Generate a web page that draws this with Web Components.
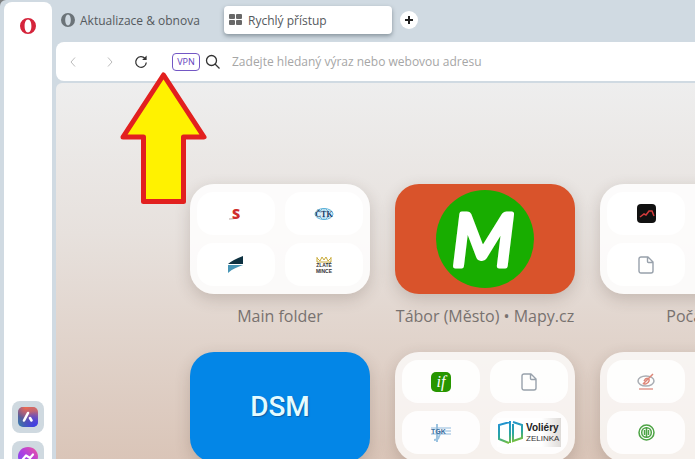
<!DOCTYPE html>
<html lang="cs">
<head>
<meta charset="utf-8">
<title>Rychlý přístup</title>
<style>
  html {
    height: 100%;
    background: #7d7f80;
  }

  body {
    margin: 0;
    height: 100%;
    overflow: hidden;
    font-family: "Open Sans", "Noto Sans", sans-serif;
    font-size: 12px;
    color: #54595d;
  }

  .dsm {
    font: 500 28px/32px Roboto, sans-serif;
    color: #e4fbff;
    text-shadow: 1px 1px 1px #0b5fa8;
  }

  svg {
    overflow: visible;
  }
</style>
</head>
<body>
<browser-window>
  <side-bar slot="side">
    <side-button slot="top" label="Opera" plain>
      <svg width="18" height="18" viewBox="0 0 18 18"><path fill="#d5243b" fill-rule="evenodd" d="M9 1a8 8 0 1 0 0 16A8 8 0 1 0 9 1zM9 2.600c2.300 0 3.400 3 3.400 6.400s-1.100 6.400-3.400 6.400S5.600 12.400 5.600 9 6.700 2.600 9 2.600z"/></svg>
    </side-button>
    <side-button label="Aria">
      <svg width="20" height="20" viewBox="0 0 20 20">
        <defs>
          <linearGradient id="aria" x1="0" y1="1" x2="1" y2="0">
            <stop offset="0" stop-color="#2f7fb4"/><stop offset=".35" stop-color="#5a5b9c"/><stop offset=".6" stop-color="#7c55a8"/><stop offset="1" stop-color="#e0705c"/>
          </linearGradient>
          <radialGradient id="warm" cx=".4" cy="0" r=".6"><stop offset="0" stop-color="#ee6c4d"/><stop offset="1" stop-color="#ee6c4d" stop-opacity="0"/></radialGradient>
          <radialGradient id="cool" cx=".9" cy="1" r=".8"><stop offset="0" stop-color="#3a3df0"/><stop offset="1" stop-color="#3a3df0" stop-opacity="0"/></radialGradient>
        </defs>
        <rect width="20" height="20" rx="5" fill="url(#aria)"/>
        <rect width="20" height="20" rx="5" fill="url(#warm)"/>
        <rect width="20" height="20" rx="5" fill="url(#cool)"/>
        <path d="M10 6L6 13.500M12 11l1.500 2.500" stroke="#fff" stroke-width="2.600" stroke-linecap="round" fill="none"/>
      </svg>
    </side-button>
    <side-button label="Messenger">
      <svg width="20" height="20" viewBox="0 0 20 20">
        <defs><linearGradient id="msg" x1="0" y1="1" x2="1" y2="0"><stop offset="0" stop-color="#6a4df5"/><stop offset=".5" stop-color="#b03fe0"/><stop offset="1" stop-color="#f2559a"/></linearGradient></defs>
        <path fill="url(#msg)" d="M10 0C4.300 0 0 4.200 0 9.500c0 2.900 1.200 5.300 3.200 7V20l3.200-1.500c1.100.3 2.300.5 3.600.5 5.700 0 10-4.200 10-9.500S15.700 0 10 0z"/>
        <path d="M5 12l3-3.500 4 2.500 3-3.500" fill="none" stroke="#fff" stroke-width="2.200" stroke-linecap="round" stroke-linejoin="round"/>
      </svg>
    </side-button>
  </side-bar>

  <tab-strip slot="tabs">
    <browser-tab label="Aktualizace &amp; obnova">
      <svg width="14" height="14" viewBox="0 0 18 18"><path fill="#6b7378" fill-rule="evenodd" d="M9 0a9 9 0 1 0 0 18A9 9 0 1 0 9 0zM9 2c2.400 0 3.600 3.300 3.600 7S11.400 16 9 16 5.400 12.700 5.400 9 6.600 2 9 2z"/></svg>
    </browser-tab>
    <browser-tab label="Rychlý přístup" active>
      <svg width="14" height="12" viewBox="0 0 14 12" fill="#686868"><rect width="6" height="5" rx="1"/><rect x="7" width="6" height="5" rx="1"/><rect y="6" width="6" height="5" rx="1"/><rect x="7" y="6" width="6" height="5" rx="1"/></svg>
    </browser-tab>
  </tab-strip>

  <address-bar slot="address"></address-bar>

  <speed-dial>
    <dial-tile label="Main folder">
      <dial-cell><svg width="20" height="20" viewBox="0 0 20 20"><path d="M3 15c4 0 9-.5 11-3" fill="none" stroke="#b9a5a0"/><text x="6" y="15" font-family="Open Sans" font-size="14" font-weight="800" fill="#cf2c2c">S</text></svg></dial-cell>
      <dial-cell><svg width="20" height="14" viewBox="0 0 20 14"><g fill="none" stroke="#5fb3d9"><ellipse cx="10" cy="7" rx="9" ry="5.500"/><ellipse cx="10" cy="7" rx="4.500" ry="5.500"/><path d="M10 1v12M3 4h14M3 10h14" stroke-width=".7"/></g><rect x="2" y="4" width="16" height="6" fill="#d9edf7"/><text x="10" y="10" text-anchor="middle" font-family="Liberation Serif" font-size="8" font-weight="700" fill="#143a66">ČTK</text></svg></dial-cell>
      <dial-cell><svg width="18" height="18" viewBox="0 0 18 18"><path d="M1 8C4 5 9 3 16 0v8z" fill="#0d3140"/><path d="M1 9h15C11 11 5 13 1 17z" fill="#4795b5"/></svg></dial-cell>
      <dial-cell><svg width="18" height="18" viewBox="0 0 18 18"><path d="M2 1v5h14V1M2 2l3 3 2-4 2 3 2-3 2 4 3-3" fill="none" stroke="#c9ab3a"/><text x="9" y="11" text-anchor="middle" font-family="Liberation Sans" font-size="5" font-weight="700" fill="#333">ZLATÉ</text><text x="9" y="17" text-anchor="middle" font-family="Liberation Sans" font-size="5" font-weight="700" fill="#333">MINCE</text></svg></dial-cell>
    </dial-tile>

    <dial-tile label="Tábor (Město) • Mapy.cz" color="#d9532b">
      <svg width="98" height="98" viewBox="0 0 98 98">
        <circle cx="49" cy="49" r="49" fill="#18ad00"/>
        <text x="47" y="76" text-anchor="middle" font-family="Lato" font-size="72" font-weight="400" font-style="italic" fill="#fff" stroke="#fff" stroke-width="5" stroke-linejoin="round">M</text>
      </svg>
    </dial-tile>

    <dial-tile label="Počasí">
      <dial-cell><svg width="19" height="19" viewBox="0 0 19 19"><rect width="19" height="19" rx="4" fill="#111"/><path d="M3 13l4-3 2 1 3-4 3 0 2 5" fill="none" stroke="#d23b3b" stroke-width="1.500"/></svg></dial-cell>
      <dial-cell></dial-cell>
      <dial-cell><page-icon></page-icon></dial-cell>
      <dial-cell></dial-cell>
    </dial-tile>

    <dial-tile color="#0386e7"><span class="dsm">DSM</span></dial-tile>

    <dial-tile tint="0.75">
      <dial-cell><svg width="20" height="20" viewBox="0 0 20 20"><rect width="20" height="20" rx="5" fill="#279600"/><text x="10" y="15" text-anchor="middle" font-family="Liberation Serif" font-size="16" font-style="italic" fill="#fff">if</text></svg></dial-cell>
      <dial-cell><page-icon></page-icon></dial-cell>
      <dial-cell><svg width="20" height="18" viewBox="0 0 20 18"><path d="M6 0v18M3 16c6 0 6-6 6-9" fill="none" stroke="#9cc3e0" stroke-width="2"/><path d="M0 4h20M12 7h8M0 10h20" stroke="#8fb9dc"/><text x="0" y="10" font-family="Liberation Sans" font-size="7" font-weight="700" fill="#3c6f9e">TGK</text></svg></dial-cell>
      <dial-cell>
        <svg width="64" height="29" viewBox="0 0 64 29">
          <defs>
            <linearGradient id="cage" gradientUnits="userSpaceOnUse" x1="6" y1="3" x2="12" y2="26"><stop offset="0" stop-color="#1f8fd8"/><stop offset=".6" stop-color="#2aa6a0"/><stop offset="1" stop-color="#7fc234"/></linearGradient>
            <linearGradient id="fade"><stop offset=".7" stop-color="#fff"/><stop offset="1" stop-color="#dedbd8"/></linearGradient>
          </defs>
          <rect width="64" height="29" fill="url(#fade)"/>
          <path d="M13 3v22M13 4L2 7v14l10 4M16 6v17l9-3V7l-9-3" fill="none" stroke="url(#cage)" stroke-width="2"/>
          <text x="29" y="13" font-family="Liberation Sans" font-size="10" font-weight="700" fill="#222">Voliéry</text>
          <text x="29" y="23" font-family="Liberation Sans" font-size="8" fill="#333">ZELINKA</text>
        </svg>
      </dial-cell>
    </dial-tile>

    <dial-tile tint="0.75">
      <dial-cell><svg width="18" height="18" viewBox="0 0 18 18"><ellipse cx="9" cy="8" rx="8" ry="5" fill="none" stroke="#a9adb3" stroke-width="1.500"/><path d="M6 11L16 1M7 8c2-4 6-3 5 0s-5 4-6 2" fill="none" stroke="#dd8678" stroke-width="1.500"/><path d="M2 16h14" stroke="#e9b3ab" stroke-width="2"/></svg></dial-cell>
      <dial-cell></dial-cell>
      <dial-cell><svg width="17" height="17" viewBox="0 0 17 17" fill="none" stroke="#4da445" stroke-width="1.500"><circle cx="8.500" cy="8.500" r="7.500"/><circle cx="8.500" cy="8.500" r="4.800"/><path d="M8.500 3v11M6.500 6v5M10.500 6v5"/></svg></dial-cell>
      <dial-cell></dial-cell>
    </dial-tile>
  </speed-dial>
</browser-window>
<hint-arrow></hint-arrow>

<script>
class BrowserWindow extends HTMLElement {
  constructor() {
    super();
    this.attachShadow({ mode: "open" });
    this.shadowRoot.innerHTML = `
          <style>
            :host {
              display: flex;
              gap: 4px;
              height: 100%;
              padding: 2px 0 0 4px;
              box-sizing: border-box;
              overflow: hidden;
              background: #d0dae2;
              border-top-left-radius: 6px;
            }

            .main {
              flex: 1;
              min-width: 0;
              display: flex;
              flex-direction: column;
            }

            ::slotted(speed-dial) {
              flex: 1;
              min-height: 0;
            }
          </style>
          <slot name="side"></slot>
          <div class="main">
            <slot name="tabs"></slot>
            <slot name="address"></slot>
            <slot></slot>
          </div>
      `;
  }
}

class SideBar extends HTMLElement {
  constructor() {
    super();
    this.attachShadow({ mode: "open" });
    this.shadowRoot.innerHTML = `
          <style>
            :host {
              display: flex;
              flex-direction: column;
              justify-content: space-between;
              align-items: center;
              width: 48px;
              flex: none;
              padding-top: 8px;
              box-sizing: border-box;
              background: #fff;
              border-radius: 8px 8px 0 0;
            }

            .apps {
              display: flex;
              flex-direction: column;
              gap: 8px;
              margin-bottom: -14px;
            }
          </style>
          <slot name="top"></slot>
          <div class="apps"><slot></slot></div>
      `;
  }
}

class SideButton extends HTMLElement {
  constructor() {
    super();
    this.attachShadow({ mode: "open" });
    this.shadowRoot.innerHTML = `
          <style>
            :host {
              display: block;
            }

            button {
              display: flex;
              align-items: center;
              justify-content: center;
              width: 32px;
              height: 32px;
              padding: 0;
              border: 0;
              border-radius: 8px;
              background: #cfd9e0;
            }

            :host([plain]) button {
              background: none;
            }
          </style>
          <button type="button" aria-label="${this.getAttribute("label")}"><slot></slot></button>
      `;
  }
}

class TabStrip extends HTMLElement {
  constructor() {
    super();
    this.attachShadow({ mode: "open" });
    this.shadowRoot.innerHTML = `
          <style>
            :host {
              display: flex;
              align-items: center;
              height: 40px;
              padding-bottom: 4px;
              box-sizing: border-box;
            }

            button {
              display: flex;
              align-items: center;
              justify-content: center;
              width: 18px;
              height: 18px;
              margin-left: 8px;
              padding: 0;
              border: 0;
              border-radius: 50%;
              background: #fff;
            }
          </style>
          <slot></slot>
          <button type="button" aria-label="Nový panel">
            <svg width="8" height="8" viewBox="0 0 8 8"><path d="M4 0v8M0 4h8" stroke="#222" stroke-width="2"/></svg>
          </button>
      `;
  }
}

class BrowserTab extends HTMLElement {
  constructor() {
    super();
    this.attachShadow({ mode: "open" });
    this.shadowRoot.innerHTML = `
          <style>
            button {
              display: flex;
              align-items: center;
              gap: 5px;
              width: 168px;
              height: 28px;
              padding: 0 5px;
              border: 0;
              border-radius: 4px;
              background: none;
              font: inherit;
              color: inherit;
              white-space: nowrap;
            }

            :host([active]) button {
              background: #fff;
              box-shadow: 0 2px 4px rgba(60, 75, 85, 0.5);
            }
          </style>
          <button type="button"><slot></slot><span></span></button>
      `;
    this.shadowRoot.querySelector("span").textContent = this.getAttribute("label");
  }
}

class AddressBar extends HTMLElement {
  constructor() {
    super();
    this.attachShadow({ mode: "open" });
    this.shadowRoot.innerHTML = `
          <style>
            :host {
              display: flex;
              align-items: center;
              height: 39px;
              flex: none;
              margin-bottom: 2px;
              padding-left: 7px;
              background: #fff;
              border-radius: 8px 0 0 8px;
            }

            button {
              display: flex;
              align-items: center;
              justify-content: center;
              padding: 0;
              border: 0;
              background: none;
              font: inherit;
            }

            .nav {
              width: 20px;
              height: 20px;
            }

            .forward {
              margin: 0 11px 0 17px;
            }

            .vpn {
              width: 28px;
              height: 18px;
              margin: 0 5px 0 21px;
              border: 1px solid #7357c4;
              border-radius: 4px;
              font-size: 9px;
              color: #6240bd;
            }

            input {
              flex: 1;
              min-width: 0;
              margin-left: 11px;
              padding: 0;
              border: 0;
              outline: 0;
              background: none;
              font: inherit;
              color: #333;
            }

            input::placeholder {
              color: #a6a6a6;
            }
          </style>
          <button class="nav" type="button" aria-label="Zpět">
            <svg width="6" height="10" viewBox="0 0 6 10"><path d="M5 0.500L1 5l4 4.500" fill="none" stroke="#bbb"/></svg>
          </button>
          <button class="nav forward" type="button" aria-label="Vpřed">
            <svg width="6" height="10" viewBox="0 0 6 10"><path d="M1 0.500L5 5 1 9.500" fill="none" stroke="#bbb"/></svg>
          </button>
          <button class="nav" type="button" aria-label="Obnovit">
            <svg width="14" height="14" viewBox="0 0 14 14"><path d="M11 3.500A5.300 5.300 0 1 0 12.300 7.500" fill="none" stroke="#333" stroke-width="1.300"/><path d="M12.600 0.500v4.500H8.100z" fill="#333"/></svg>
          </button>
          <button class="vpn" type="button">VPN</button>
          <svg width="16" height="16" viewBox="0 0 16 16" fill="none" stroke="#333" stroke-width="1.300"><circle cx="6.500" cy="6.500" r="5"/><path d="M10 10l4.500 4.500"/></svg>
          <input type="text" aria-label="Adresa" placeholder="Zadejte hledaný výraz nebo webovou adresu">
      `;
  }
}

class SpeedDial extends HTMLElement {
  constructor() {
    super();
    this.attachShadow({ mode: "open" });
    this.shadowRoot.innerHTML = `
          <style>
            :host {
              display: grid;
              grid-template-columns: repeat(3, 180px);
              grid-auto-rows: 144px;
              gap: 24px 25px;
              padding: 101px 0 0 134px;
              overflow: hidden;
              border-top-left-radius: 6px;
              background: linear-gradient(#eeeeee, #e7e1dd 40%, #dac5b8);
            }
          </style>
          <slot></slot>
      `;
  }
}

class DialTile extends HTMLElement {
  constructor() {
    super();
    this.attachShadow({ mode: "open" });
    const color = this.getAttribute("color");
    const tint = this.getAttribute("tint") || "0.85";
    this.shadowRoot.innerHTML = `
          <style>
            :host {
              display: block;
            }

            a {
              display: block;
              color: #78726f;
              font-size: 16px;
              line-height: 24px;
              text-align: center;
              text-decoration: none;
              white-space: nowrap;
            }

            .face {
              display: grid;
              grid-template-columns: 1fr 1fr;
              grid-template-rows: 1fr 1fr;
              gap: 8px 10px;
              height: 110px;
              margin-bottom: 10px;
              padding: 8px 7px;
              box-sizing: border-box;
              border-radius: 24px;
              background: rgba(255, 255, 255, ${tint});
              box-shadow: 0 5px 16px rgba(70, 50, 40, 0.2);
            }

            .face.solid {
              display: flex;
              align-items: center;
              justify-content: center;
              background: ${color};
            }
          </style>
          <a href="#"><div class="face ${color ? "solid" : ""}"><slot></slot></div><span></span></a>
      `;
    this.shadowRoot.querySelector("span").textContent = this.getAttribute("label");
  }
}

class DialCell extends HTMLElement {
  constructor() {
    super();
    this.attachShadow({ mode: "open" });
    this.shadowRoot.innerHTML = `
          <style>
            :host {
              display: flex;
              align-items: center;
              justify-content: center;
              border-radius: 16px;
              background: rgba(255, 255, 255, 0.85);
            }
          </style>
          <slot></slot>
      `;
  }
}

class PageIcon extends HTMLElement {
  constructor() {
    super();
    this.attachShadow({ mode: "open" });
    this.shadowRoot.innerHTML = `
          <style>
            :host {
              display: flex;
            }
          </style>
          <svg width="16" height="18" viewBox="0 0 16 18" fill="none" stroke="#98a1ab" stroke-width="1.400" stroke-linejoin="round"><path d="M3 1h7l5 5v9a2 2 0 0 1-2 2H3a2 2 0 0 1-2-2V3a2 2 0 0 1 2-2zM9.500 1v4.500a1 1 0 0 0 1 1H15"/></svg>
      `;
  }
}

// Callout that lies over the page and points at the VPN badge
class HintArrow extends HTMLElement {
  constructor() {
    super();
    this.attachShadow({ mode: "open" });
    this.shadowRoot.innerHTML = `
          <style>
            :host {
              position: absolute;
              left: 118px;
              top: 70px;
              pointer-events: none;
            }

            svg {
              display: block;
            }
          </style>
          <svg width="91" height="136" viewBox="0 0 91 136"><path d="M45.500 5L86 67H65.500v64.500h-40V67H5z" fill="#fff200" stroke="#e2201f" stroke-width="5" stroke-linejoin="round"/></svg>
      `;
  }
}

customElements.define("browser-window", BrowserWindow);
customElements.define("side-bar", SideBar);
customElements.define("side-button", SideButton);
customElements.define("tab-strip", TabStrip);
customElements.define("browser-tab", BrowserTab);
customElements.define("address-bar", AddressBar);
customElements.define("speed-dial", SpeedDial);
customElements.define("dial-tile", DialTile);
customElements.define("dial-cell", DialCell);
customElements.define("page-icon", PageIcon);
customElements.define("hint-arrow", HintArrow);
</script>
</body>
</html>
